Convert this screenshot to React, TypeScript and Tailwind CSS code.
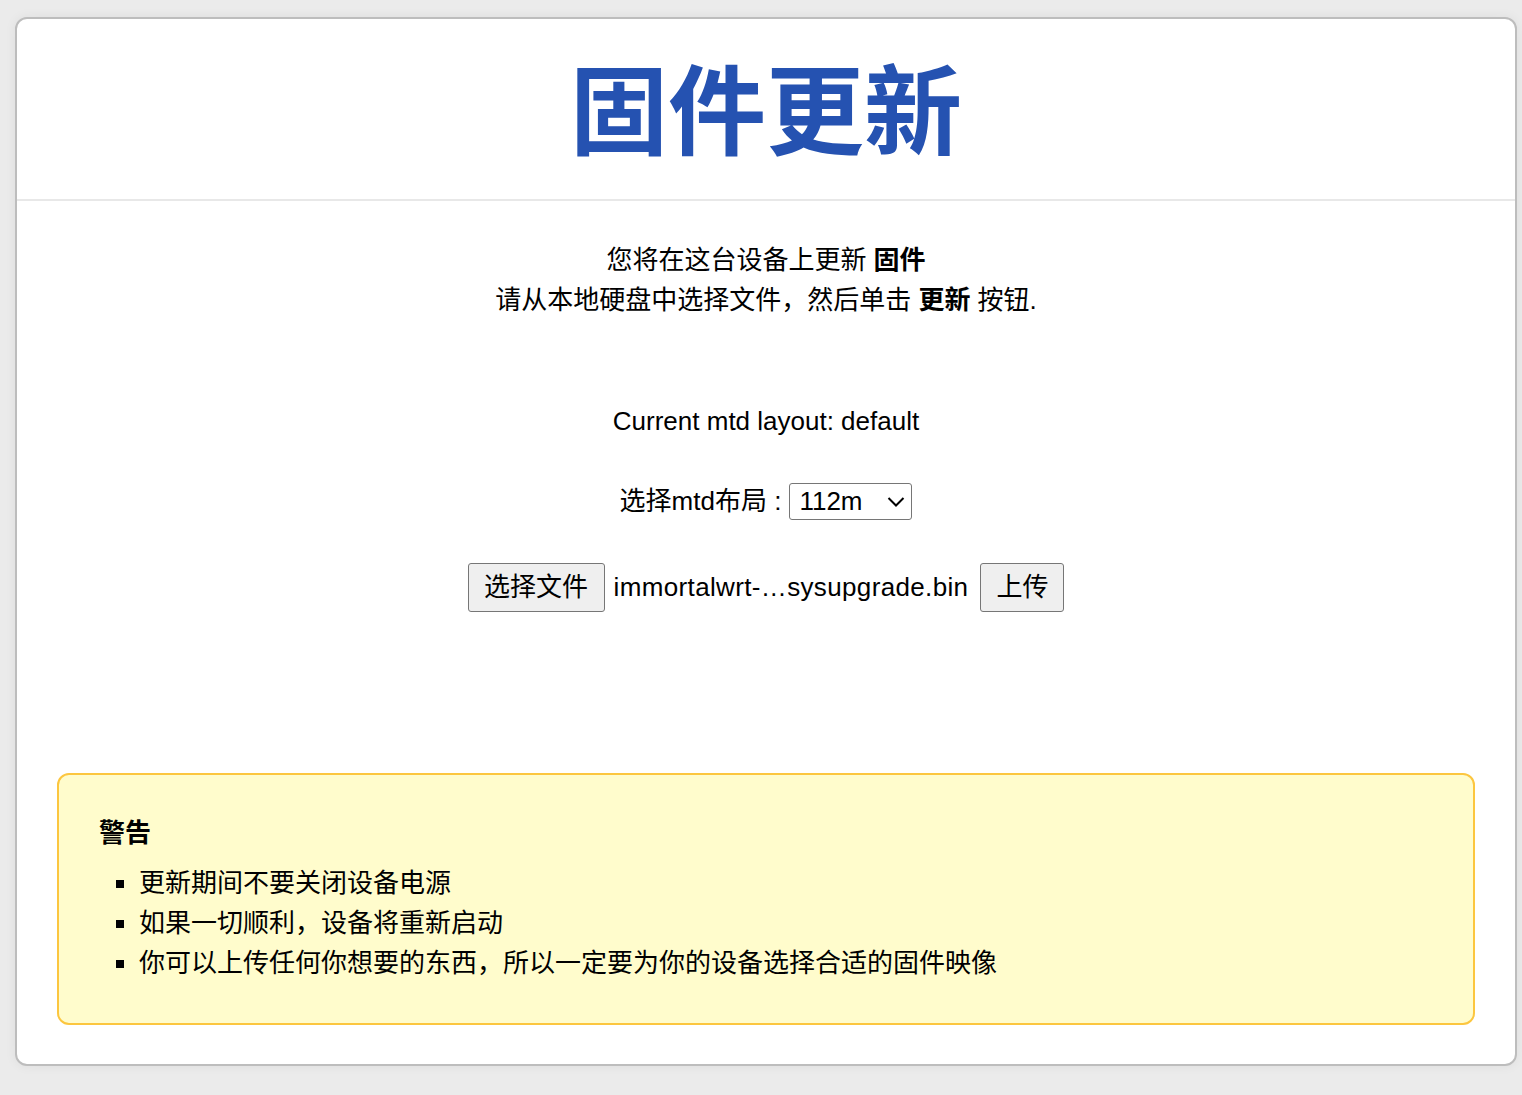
import React from "react";

const cjk = { fontFamily: '"Liberation Sans", "Noto Sans CJK SC", sans-serif' };

export default function App() {
  return (
    <div className="min-h-[1095px] bg-[#ebebeb] pt-[17px] pb-[29px]" style={cjk}>
      <div className="ml-[15px] w-[1502px] rounded-[12px] border-2 border-[#bdbdbd] bg-white text-black shadow-[0_0_12px_rgba(0,0,0,0.06)]">
        <div className="flex h-[182px] items-center justify-center border-b-2 border-[#e8e8e8]">
          <h1
            className="-mt-[10px] text-[98px] font-bold leading-none tracking-[0px] text-[#2552b1]"
            style={{ fontFamily: '"Noto Sans CJK SC", sans-serif' }}
          >
            固件更新
          </h1>
        </div>
        <div className="flex flex-col items-center pt-[39px] text-[26px] leading-[40px]">
          <p>
            您将在这台设备上更新 <b>固件</b>
          </p>
          <p>
            请从本地硬盘中选择文件，然后单击 <b>更新</b> 按钮.
          </p>
          <p className="mt-[81px]">Current mtd layout: default</p>
          <div className="mt-[40px] flex h-[40px] items-center">
            <span>选择mtd布局 :</span>
            <div className="relative ml-[8px] flex">
              <select className="h-[37px] w-[123px] appearance-none rounded-[3px] border border-[#767676] bg-white pl-[9px] text-[26px] leading-[35px] text-black">
                <option>112m</option>
              </select>
              <svg
                className="pointer-events-none absolute right-[6px] top-[12px]"
                width="20"
                height="13"
                viewBox="0 0 20 13"
                fill="none"
              >
                <path d="M2.5 3 L10 10.5 L17.5 3" stroke="#000" strokeWidth="2" />
              </svg>
            </div>
          </div>
          <div className="mt-[41px] flex h-[50px] items-center">
            <button className="h-[49px] w-[137px] rounded-[3px] border border-[#767676] bg-[#efefef] text-[26px]">
              选择文件
            </button>
            <span className="ml-[9px] mr-[12px] tracking-[0.35px]">immortalwrt-…sysupgrade.bin</span>
            <button className="h-[49px] w-[84px] rounded-[3px] border border-[#767676] bg-[#efefef] text-[26px]">
              上传
            </button>
          </div>
        </div>
        <div className="mx-[40px] mt-[161px] mb-[39px] rounded-[12px] border-2 border-[#fcc63f] bg-[#fffccc] px-[40px] pt-[38px] pb-[40px] text-[26px] leading-[40px]">
          <div className="font-bold">警告</div>
          <ul className="mt-[10px] list-[square] pl-[40px]">
            <li>更新期间不要关闭设备电源</li>
            <li>如果一切顺利，设备将重新启动</li>
            <li>你可以上传任何你想要的东西，所以一定要为你的设备选择合适的固件映像</li>
          </ul>
        </div>
      </div>
    </div>
  );
}
